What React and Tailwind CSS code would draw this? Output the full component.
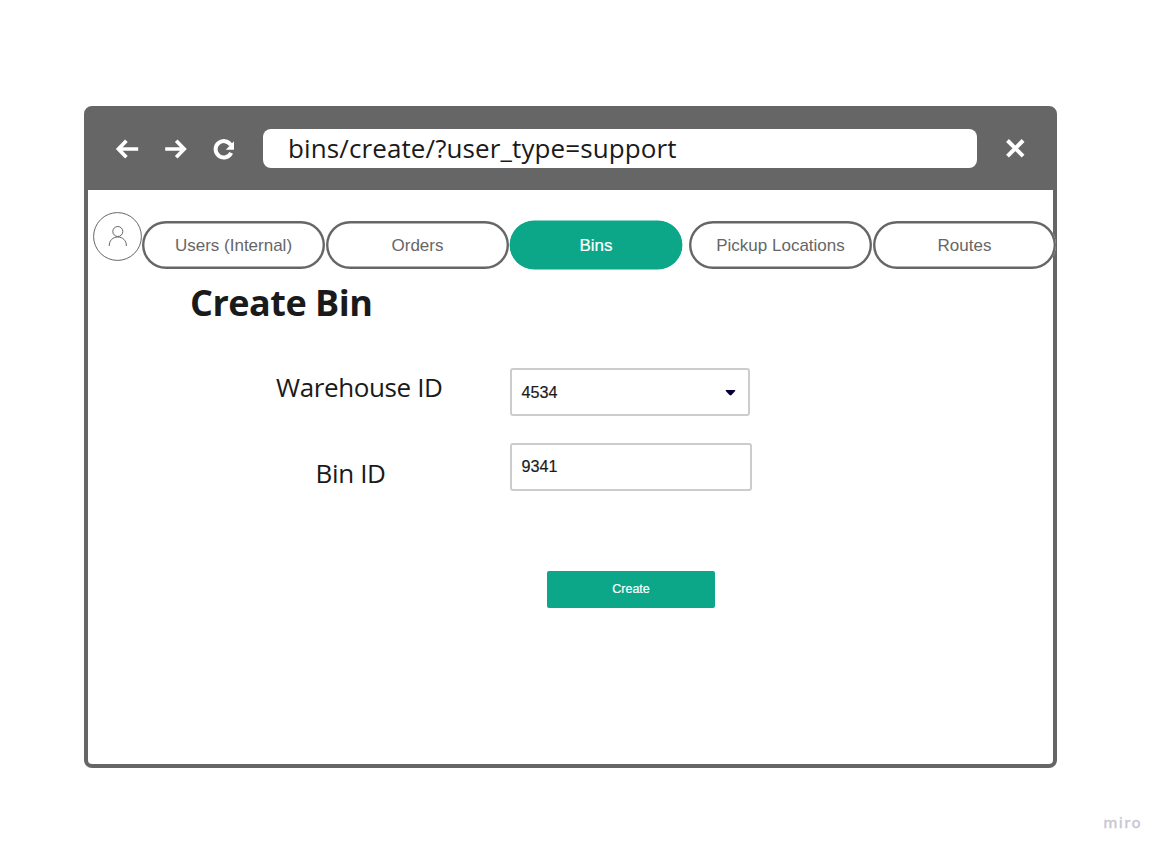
function BackIcon() {
  return (
    <svg width="24" height="20" viewBox="0 0 24 20" fill="none" stroke="#fff" strokeWidth="3.700">
      <path d="M23.200 10H4M11.400 1.800L3.400 10l8 8.200" />
    </svg>
  );
}

function ForwardIcon() {
  return (
    <svg width="24" height="20" viewBox="0 0 24 20" fill="none" stroke="#fff" strokeWidth="3.700">
      <path d="M1.200 10H20M12.200 1.800l8 8.200-8 8.200" />
    </svg>
  );
}

function ReloadIcon() {
  return (
    <svg width="22" height="22" viewBox="0 0 22 22" fill="none">
      <path d="M18.200 14.900A8.200 8.200 0 1 1 17.800 7" stroke="#fff" strokeWidth="4" />
      <path d="M21 3.300V11.800H12.800Z" fill="#fff" />
    </svg>
  );
}

function CloseIcon() {
  return (
    <svg width="20" height="20" viewBox="0 0 20 20" fill="none" stroke="#fff" strokeWidth="4">
      <path d="M2.500 1.500l15.600 15.600M18.100 1.500L2.500 17.100" />
    </svg>
  );
}

function Avatar() {
  return (
    <svg className="shrink-0" width="49" height="49" viewBox="0 0 49 49" fill="none" stroke="#666" strokeWidth="1">
      <circle cx="24.500" cy="24.500" r="23.900" />
      <circle cx="24.800" cy="19.500" r="5" />
      <path d="M16.200 34c0-5.500 3.600-9 8.600-9s8.600 3.500 8.600 9" />
    </svg>
  );
}

function Tab({ children, active }) {
  return (
    <button
      className={
        active
          ? "mr-[7px] h-[48px] w-[172px] shrink-0 rounded-full bg-[#0ca789] pt-px text-[17px] text-white shadow-[0_0_0_0.4px_#0ca789] [-webkit-text-stroke:0.2px_#fff]"
          : "mr-px h-[48px] w-[183px] shrink-0 rounded-full bg-white pt-px text-[17px] text-[#666] shadow-[inset_0_0_0_2.4px_#666]"
      }
    >
      {children}
    </button>
  );
}

export default function App() {
  return (
    <div className="flex h-[856px] w-[1167px] flex-col overflow-hidden bg-white pt-[106px] font-['Liberation_Sans',sans-serif]">
      <div className="ml-[84px] h-[662px] w-[973px] shrink-0 rounded-[8px] border-4 border-[#666] bg-white">
        <header className="flex h-[80px] items-center bg-[#666] pb-[3px] pl-[27px]">
          <BackIcon />
          <div className="ml-[25px] flex"><ForwardIcon /></div>
          <div className="ml-[25px] flex"><ReloadIcon /></div>
          <div className="ml-[28px] flex h-[39px] w-[714px] items-center rounded-[8px] bg-white pl-[25px] font-['Open_Sans',sans-serif] text-[26px] leading-[39px] tracking-[0.110px] text-[#1a1a1a]">
            bins/create/?user_type=support
          </div>
          <div className="ml-[28px] flex"><CloseIcon /></div>
        </header>

        <nav className="flex pt-[22px] pl-[5px]">
          <Avatar />
          <div className="flex items-start pt-[9px]">
            <Tab>Users (Internal)</Tab>
            <Tab>Orders</Tab>
            <Tab active>Bins</Tab>
            <Tab>Pickup Locations</Tab>
            <Tab>Routes</Tab>
          </div>
        </nav>

        <main className="text-[#1a1a1a]">
          <h1 className="mt-[10px] ml-[102px] font-['Open_Sans',sans-serif] text-[36px] leading-[48px] font-bold tracking-[-0.500px]">
            Create Bin
          </h1>
          <div className="mt-[41px] flex">
            <label className="w-[422px] pl-[188px] font-['Open_Sans',sans-serif] text-[26px] leading-[38px] tracking-[-0.380px]">
              Warehouse ID
            </label>
            <div className="flex h-[48px] w-[240px] items-center justify-between rounded-[3px] border-2 border-[#ccc] pr-[12.500px] pl-[9.500px] text-[16.200px] [-webkit-text-stroke:0.2px_#1a1a1a]">
              4534
              <svg width="11" height="7" viewBox="0 0 11 7">
                <path d="M1.200 0.900h8.600q1 0.200 0.400 1.200L6.500 6.100q-1 0.900-2 0L0.800 2.100Q0.200 1.100 1.200 0.900Z" fill="#050038" />
              </svg>
            </div>
          </div>
          <div className="mt-[27px] flex">
            <label className="w-[422px] pt-[10px] pl-[227.500px] font-['Open_Sans',sans-serif] text-[26px] leading-[40px] tracking-[-0.350px]">
              Bin ID
            </label>
            <div className="flex h-[48px] w-[242px] items-center rounded-[3px] border-2 border-[#ccc] pb-[2px] pl-[9.500px] text-[16.200px] [-webkit-text-stroke:0.2px_#1a1a1a]">
              9341
            </div>
          </div>
          <button className="mt-[78px] ml-[459px] h-[37px] w-[168px] rounded-[2px] bg-[#0ca789] text-[12.5px] text-white [-webkit-text-stroke:0.2px_#fff]">
            Create
          </button>
        </main>
      </div>
      <footer className="mt-[44px] flex justify-end pr-[25px] font-['Noto_Sans',sans-serif] text-[15px] leading-[20px] font-medium tracking-[1.300px] text-[#c9c8d5] [-webkit-text-stroke:0.3px_#c9c8d5]">
        miro
      </footer>
    </div>
  );
}
